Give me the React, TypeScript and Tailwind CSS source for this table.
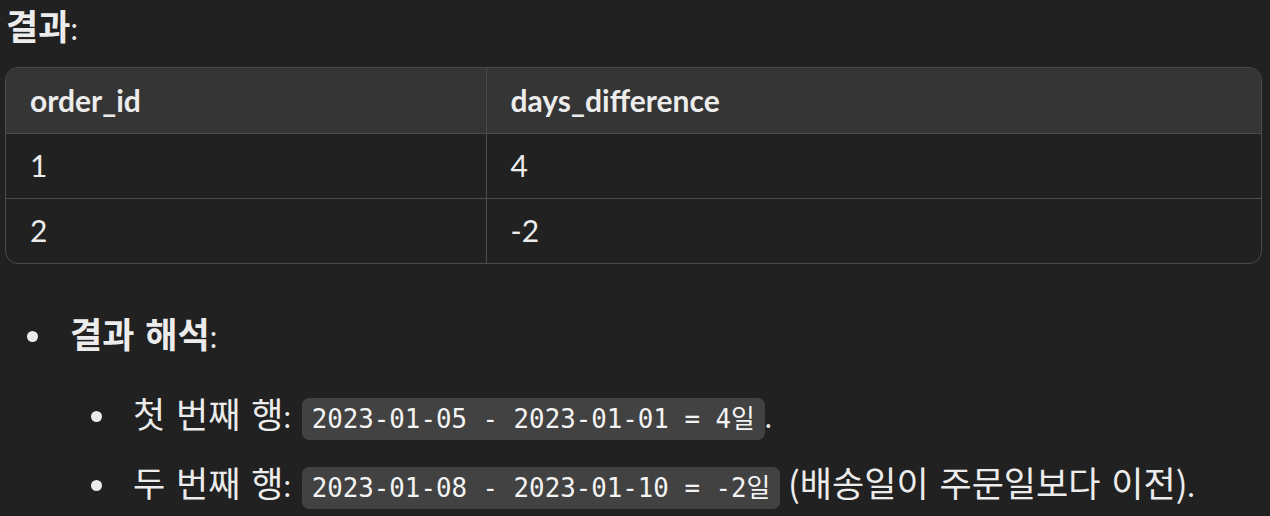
import React from 'react'

const rows = [
  { id: '1', diff: '4' },
  { id: '2', diff: '-2' },
]

// Hangul runs are set a little larger than the Latin text, as in the reference
const Ko: React.FC<{ children: React.ReactNode; className?: string }> = ({ children, className = '' }) => (
  <span className={`font-['Noto_Sans_CJK_KR',sans-serif] text-[35px] leading-none [word-spacing:3px] ${className}`}>{children}</span>
)

const Bullet: React.FC<{ className?: string }> = ({ className = '' }) => (
  <span className={`inline-block h-[11px] w-[11px] shrink-0 rounded-full bg-[#ececec] ${className}`} />
)

const Code: React.FC<{ children: React.ReactNode }> = ({ children }) => (
  <code className="ml-[3px] rounded-[7px] bg-[#424242] px-[10px] py-[6px] font-['DejaVu_Sans_Mono','Noto_Sans_CJK_KR',monospace] text-[25.8px] leading-none text-[#f4f4f4]">
    {children}
  </code>
)

export default function App() {
  return (
    <div className="h-[516px] overflow-hidden bg-[#212121] pl-[6px] font-['Lato','Noto_Sans_CJK_KR',sans-serif] text-[30px] leading-[45px] text-[#ececec]">
      <p className="pt-[6px]">
        <Ko className="font-bold">결과</Ko>:
      </p>

      <div className="mt-[16px] w-[1257px] overflow-hidden rounded-[13px] border border-[#4b4b4b]" style={{ marginLeft: -1 }}>
        <table className="w-full border-collapse text-left">
          <thead>
            <tr className="bg-[#353535]">
              <th className="h-[65px] w-[480px] border-r border-b border-[#4b4b4b] pl-[24px] font-bold">order_id</th>
              <th className="h-[65px] border-b border-[#4b4b4b] pl-[24px] font-bold">days_difference</th>
            </tr>
          </thead>
          <tbody>
            {rows.map((r, i) => (
              <tr key={r.id}>
                <td className={`h-[65px] border-r border-[#4b4b4b] pl-[24px] ${i === 0 ? 'border-b' : ''}`}>{r.id}</td>
                <td className={`h-[65px] border-[#4b4b4b] pl-[24px] ${i === 0 ? 'border-b' : ''}`}>{r.diff}</td>
              </tr>
            ))}
          </tbody>
        </table>
      </div>

      <div className="mt-[50px] flex items-center">
        <Bullet className="ml-[21px]" />
        <span className="ml-[32px]">
          <Ko className="font-bold">결과 해석</Ko>:
        </span>
      </div>

      <div className="mt-[35px] flex flex-col gap-[24px] pl-[85px]">
        <div className="flex items-center">
          <Bullet />
          <span className="ml-[31px] whitespace-pre">
            <Ko>첫 번째 행</Ko>: <Code>2023-01-05 - 2023-01-01 = 4일</Code>.
          </span>
        </div>
        <div className="flex items-center">
          <Bullet />
          <span className="ml-[31px] whitespace-pre">
            <Ko>두 번째 행</Ko>: <Code>2023-01-08 - 2023-01-10 = -2일</Code> <Ko>(배송일이 주문일보다 이전)</Ko>.
          </span>
        </div>
      </div>
    </div>
  )
}
